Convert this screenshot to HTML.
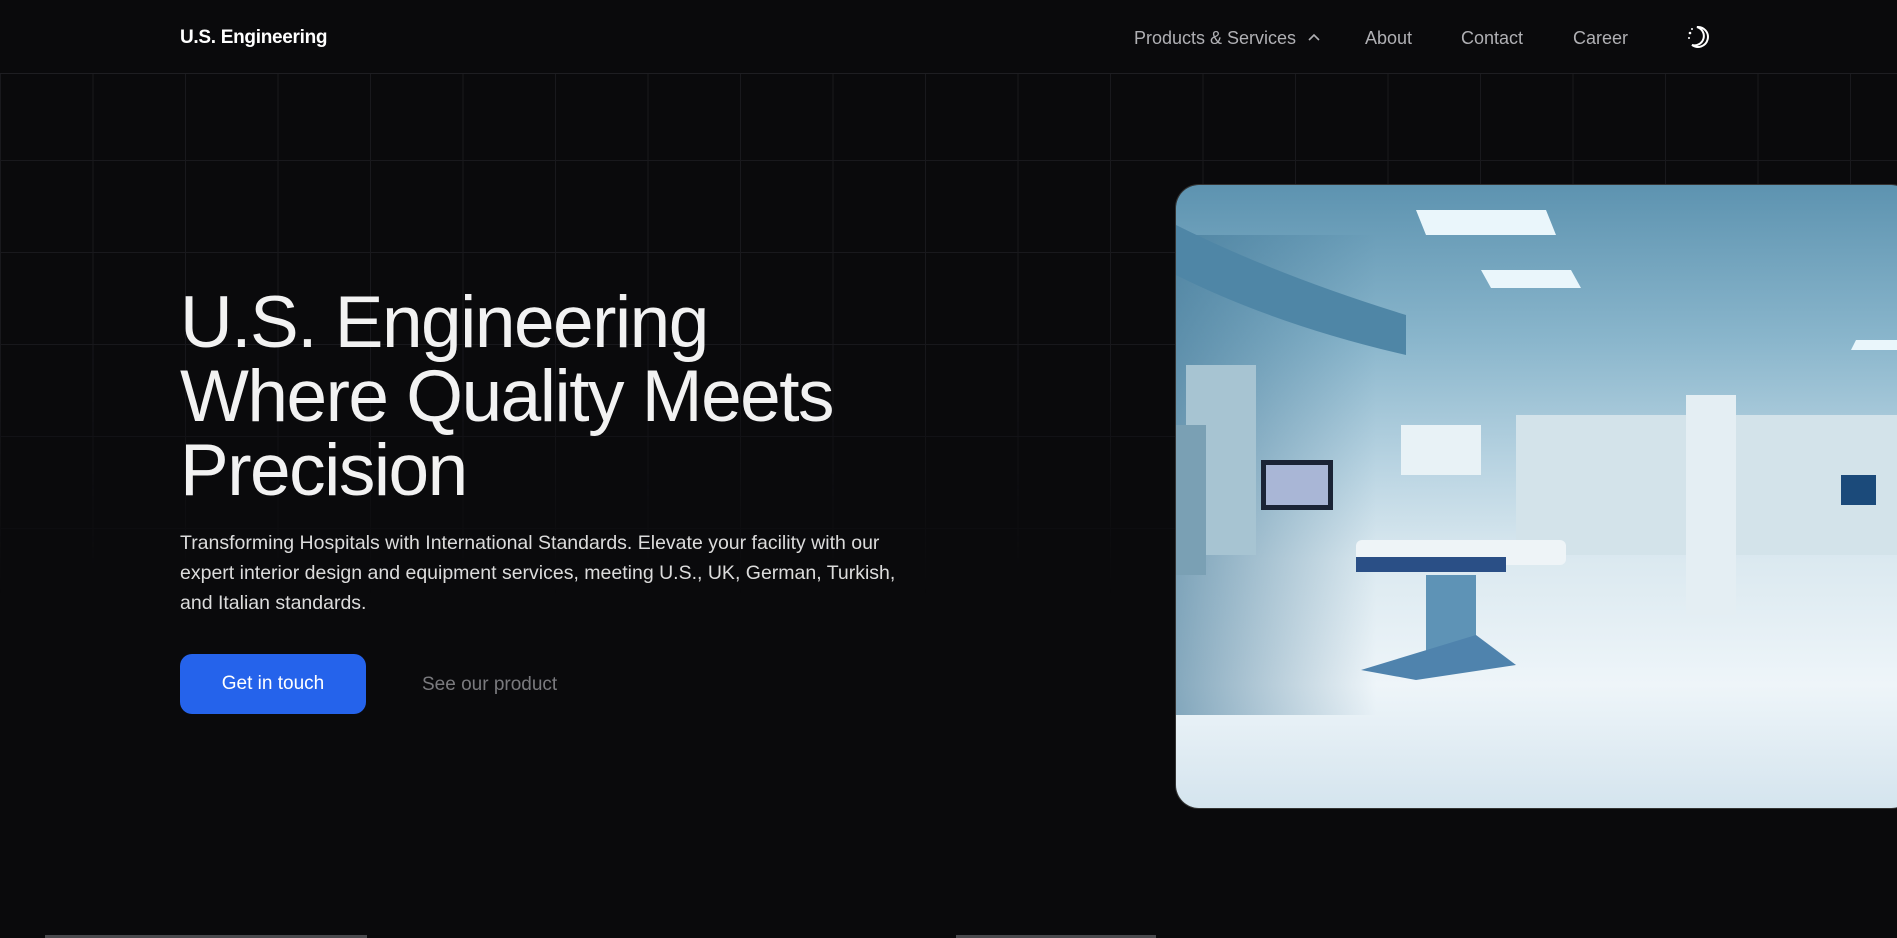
<!DOCTYPE html>
<html><head><meta charset="utf-8"><style>
*{margin:0;padding:0;box-sizing:border-box}
html,body{width:1897px;height:938px;overflow:hidden;background:#0a0a0c;font-family:"Liberation Sans",sans-serif}
.grid{position:absolute;left:0;top:74px;width:1897px;height:520px;
background-image:linear-gradient(to right,#19191d 1px,transparent 1px),linear-gradient(to bottom,#19191d 1px,transparent 1px);
background-size:92.5px 92px;background-position:0 -6px;
-webkit-mask-image:linear-gradient(to bottom,#000 0%,#000 50%,transparent 100%);}
.nav{position:absolute;top:0;left:0;width:1897px;height:74px;border-bottom:1px solid #1e1e22;background:#0a0a0c}
.logo{position:absolute;left:180px;top:27px;color:#fff;font-weight:bold;font-size:19px;letter-spacing:-0.3px}
.ni{position:absolute;top:28px;color:#b0b0b4;font-size:18px}
h1{position:absolute;left:180px;top:286px;color:#f2f2f2;font-weight:normal;font-size:73px;line-height:74px;letter-spacing:-1.5px}
p{position:absolute;left:180px;top:528px;width:745px;color:#dcdcdc;font-size:19.5px;line-height:30px}
.btn{position:absolute;left:180px;top:654px;width:186px;height:60px;border-radius:12px;background:#2563eb;color:#fff;font-size:19px;text-align:center;line-height:60px}
.see{position:absolute;left:422px;top:674px;color:#7a7a7e;font-size:19px}
.img{position:absolute;left:1175px;top:184px;width:740px;height:625px;border-radius:24px;overflow:hidden;border:1px solid #333}
.bl{position:absolute;top:935px;height:3px;background:#4a4a4e}
</style></head><body>
<div class="grid"></div>
<div class="nav">
<div class="logo">U.S. Engineering</div>
<div class="ni" style="left:1134px">Products &amp; Services <svg width="14" height="10" viewBox="0 0 14 10" style="margin-left:6px;vertical-align:2px"><path d="M2 8 L7 3 L12 8" stroke="#b0b0b4" stroke-width="1.6" fill="none"/></svg></div>
<div class="ni" style="left:1365px">About</div>
<div class="ni" style="left:1461px">Contact</div>
<div class="ni" style="left:1573px">Career</div>
<svg style="position:absolute;left:1686px;top:24px" width="24" height="26" viewBox="0 0 24 26"><path d="M11 3 A10 10 0 1 1 6 21 A8 8 0 0 0 11 3Z" fill="none" stroke="#fff" stroke-width="2"/><circle cx="4" cy="9" r="1.3" fill="#fff"/><circle cx="6" cy="5" r="1" fill="#fff"/><circle cx="3" cy="14" r="1" fill="#fff"/></svg>
</div>
<h1>U.S. Engineering<br>Where Quality Meets<br>Precision</h1>
<p>Transforming Hospitals with International Standards. Elevate your facility with our expert interior design and equipment services, meeting U.S., UK, German, Turkish, and Italian standards.</p>
<div class="btn">Get in touch</div>
<div class="see">See our product</div>
<div class="img">
<svg width="740" height="625" viewBox="0 0 740 625" preserveAspectRatio="none">
<defs>
<linearGradient id="bg" x1="0" y1="0" x2="0" y2="1">
<stop offset="0" stop-color="#5d93b0"/><stop offset="0.25" stop-color="#8ab6cc"/><stop offset="0.45" stop-color="#b9d4e2"/><stop offset="0.6" stop-color="#dbe9f0"/><stop offset="0.8" stop-color="#eef5f9"/><stop offset="1" stop-color="#d4e4ee"/></linearGradient>
<linearGradient id="lw" x1="0" y1="0" x2="1" y2="0"><stop offset="0" stop-color="#3f7595"/><stop offset="1" stop-color="#3f7595" stop-opacity="0"/></linearGradient>
</defs>
<rect width="740" height="625" fill="url(#bg)"/>
<rect x="0" y="50" width="200" height="480" fill="url(#lw)" opacity="0.6"/>
<path d="M0 40 Q100 90 230 130 L230 170 Q100 140 0 90Z" fill="#4f86a6"/>
<rect x="10" y="180" width="70" height="190" fill="#a7c4d2"/>
<rect x="340" y="230" width="390" height="140" fill="#d3e3ea"/>
<polygon points="240,25 370,25 380,50 250,50" fill="#eaf6fb"/>
<polygon points="305,85 395,85 405,103 315,103" fill="#eaf6fb"/>
<polygon points="680,155 740,155 740,165 675,165" fill="#eaf6fb"/>
<rect x="85" y="275" width="72" height="50" fill="#1b2436"/><rect x="90" y="280" width="62" height="40" fill="#a9b6d6"/>
<rect x="225" y="240" width="80" height="50" fill="#e8f2f6"/>
<rect x="180" y="355" width="210" height="25" rx="6" fill="#eef4f7"/><rect x="180" y="372" width="150" height="15" fill="#2a4f86"/>
<rect x="250" y="390" width="50" height="80" fill="#5e93b6"/>
<polygon points="185,485 300,450 340,480 240,495" fill="#4f83ad"/>
<rect x="510" y="210" width="50" height="220" fill="#e4eef3"/>
<rect x="665" y="290" width="35" height="30" fill="#1b4a7a"/>
<rect x="0" y="240" width="30" height="150" fill="#7aa0b4"/>
</svg>
</div>
<div class="bl" style="left:45px;width:322px"></div>
<div class="bl" style="left:956px;width:200px"></div>
</body></html>
